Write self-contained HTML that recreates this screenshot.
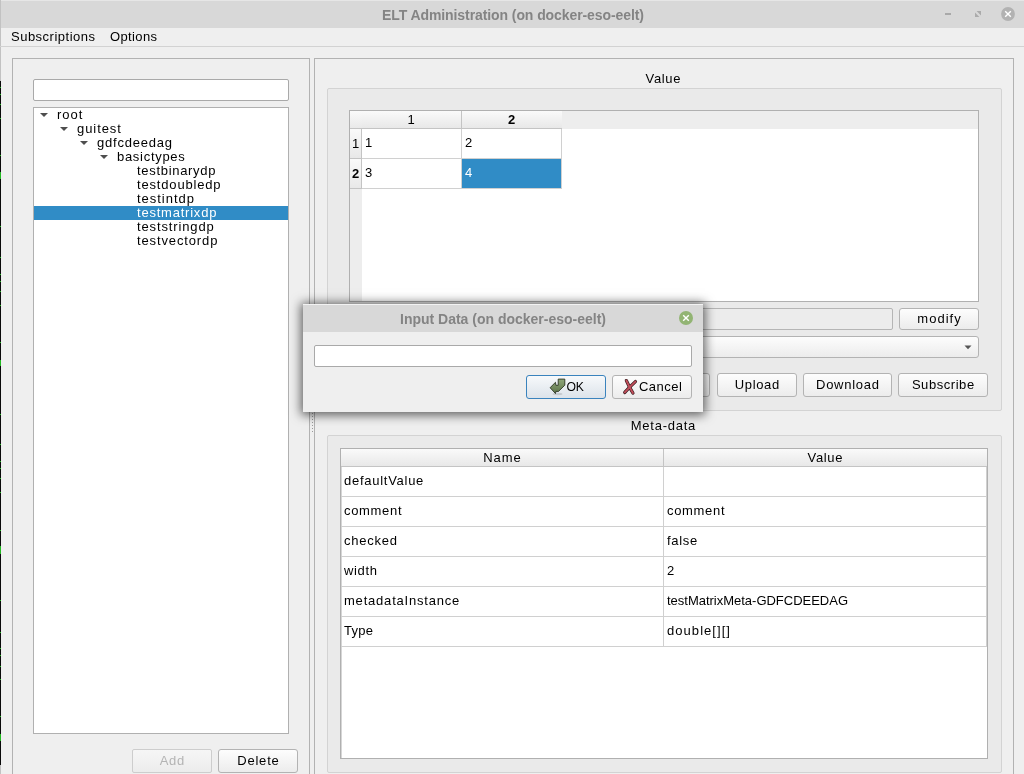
<!DOCTYPE html>
<html><head><meta charset="utf-8"><style>
html,body{margin:0;padding:0}
body{width:1024px;height:774px;overflow:hidden;background:#efefef;position:relative;font-family:"Liberation Sans",sans-serif;}
#app{position:absolute;left:0;top:0;width:1024px;height:774px;background:#efefef;will-change:transform;overflow:hidden}
#app>div,#app>span,#app>svg{position:absolute;}
span{white-space:pre;line-height:16px;-webkit-font-smoothing:antialiased}
</style></head><body><div id="app">
<div style="left:0px;top:0px;width:1024px;height:28px;background:#d8d8d8"></div>
<div style="left:0px;top:0px;width:1024px;height:1px;background:#e6e6e6"></div>
<span style="left:382.00px;top:7.15px;font-size:14px;font-weight:bold;color:#848484;letter-spacing:-0.085px">ELT Administration (on docker-eso-eelt)</span>
<div style="left:945px;top:13px;width:6px;height:2px;background:#a9a9a9"></div>
<svg style="left:974px;top:10px" width="8" height="8" viewBox="0 0 8 8"><path d="M2.6 1 H7 V5.4 Z" fill="#ababab"/><path d="M1 2.6 V7 H5.4 Z" fill="#ababab"/></svg>
<svg style="left:1000px;top:6px" width="16" height="16" viewBox="0 0 16 16"><circle cx="8" cy="8" r="6.9" fill="#b2b2b2"/><path d="M4.7 5.7 L5.7 4.7 L8 7 L10.3 4.7 L11.3 5.7 L9 8 L11.3 10.3 L10.3 11.3 L8 9 L5.7 11.3 L4.7 10.3 L7 8 Z" fill="#fff"/></svg>
<div style="left:0px;top:0px;width:1px;height:81px;background:#c2c2c2"></div>
<div style="left:0px;top:81px;width:1px;height:684px;background:#0a0a0a"></div>
<div style="left:0px;top:765px;width:1px;height:9px;background:#c2c2c2"></div>
<div style="left:0px;top:87px;width:1px;height:1px;background:#22b822"></div>
<div style="left:0px;top:94px;width:1px;height:1px;background:#22b822"></div>
<div style="left:0px;top:104px;width:1px;height:1px;background:#22b822"></div>
<div style="left:0px;top:118px;width:1px;height:1px;background:#22b822"></div>
<div style="left:0px;top:155px;width:1px;height:1px;background:#22b822"></div>
<div style="left:0px;top:172px;width:1px;height:7px;background:#22b822"></div>
<div style="left:0px;top:226px;width:1px;height:1px;background:#22b822"></div>
<div style="left:0px;top:257px;width:1px;height:1px;background:#22b822"></div>
<div style="left:0px;top:274px;width:1px;height:1px;background:#22b822"></div>
<div style="left:0px;top:281px;width:1px;height:1px;background:#22b822"></div>
<div style="left:0px;top:291px;width:1px;height:1px;background:#22b822"></div>
<div style="left:0px;top:305px;width:1px;height:1px;background:#22b822"></div>
<div style="left:0px;top:342px;width:1px;height:1px;background:#22b822"></div>
<div style="left:0px;top:360px;width:1px;height:6px;background:#22b822"></div>
<div style="left:0px;top:414px;width:1px;height:1px;background:#22b822"></div>
<div style="left:0px;top:444px;width:1px;height:1px;background:#22b822"></div>
<div style="left:0px;top:461px;width:1px;height:1px;background:#22b822"></div>
<div style="left:0px;top:468px;width:1px;height:1px;background:#22b822"></div>
<div style="left:0px;top:478px;width:1px;height:1px;background:#22b822"></div>
<div style="left:0px;top:492px;width:1px;height:1px;background:#22b822"></div>
<div style="left:0px;top:530px;width:1px;height:1px;background:#22b822"></div>
<div style="left:0px;top:546px;width:1px;height:8px;background:#22b822"></div>
<div style="left:0px;top:600px;width:1px;height:1px;background:#22b822"></div>
<div style="left:0px;top:632px;width:1px;height:1px;background:#22b822"></div>
<div style="left:0px;top:648px;width:1px;height:1px;background:#22b822"></div>
<div style="left:0px;top:655px;width:1px;height:1px;background:#22b822"></div>
<div style="left:0px;top:666px;width:1px;height:1px;background:#22b822"></div>
<div style="left:0px;top:679px;width:1px;height:1px;background:#22b822"></div>
<div style="left:0px;top:716px;width:1px;height:1px;background:#22b822"></div>
<div style="left:0px;top:734px;width:1px;height:7px;background:#22b822"></div>
<div style="left:0px;top:46px;width:1024px;height:1px;background:#d2d2d2"></div>
<span style="left:11.00px;top:28.50px;font-size:13px;font-weight:normal;color:#000;letter-spacing:0.497px">Subscriptions</span>
<span style="left:110.00px;top:28.50px;font-size:13px;font-weight:normal;color:#000;letter-spacing:0.367px">Options</span>
<div style="left:12px;top:58px;width:298px;height:730px;border:1px solid #b2b2b2;box-sizing:border-box"></div>
<div style="left:33px;top:79px;width:256px;height:22px;background:#fff;border:1px solid #a9a9a9;border-radius:2px;box-sizing:border-box"></div>
<div style="left:33px;top:107px;width:256px;height:627px;background:#fff;border:1px solid #b0b0b0;box-sizing:border-box"></div>
<div style="left:34px;top:206px;width:254px;height:14px;background:#308cc6"></div>
<span style="left:57.00px;top:106.50px;font-size:13px;font-weight:normal;color:#000;letter-spacing:0.996px">root</span>
<svg style="left:40px;top:113px" width="8" height="5" viewBox="0 0 8 5"><path d="M0 0 H8 L4 4 Z" fill="#4e4e4e"/></svg>
<span style="left:77.00px;top:120.50px;font-size:13px;font-weight:normal;color:#000;letter-spacing:0.933px">guitest</span>
<svg style="left:60px;top:127px" width="8" height="5" viewBox="0 0 8 5"><path d="M0 0 H8 L4 4 Z" fill="#4e4e4e"/></svg>
<span style="left:97.00px;top:134.50px;font-size:13px;font-weight:normal;color:#000;letter-spacing:0.782px">gdfcdeedag</span>
<svg style="left:80px;top:141px" width="8" height="5" viewBox="0 0 8 5"><path d="M0 0 H8 L4 4 Z" fill="#4e4e4e"/></svg>
<span style="left:117.00px;top:148.50px;font-size:13px;font-weight:normal;color:#000;letter-spacing:0.706px">basictypes</span>
<svg style="left:100px;top:155px" width="8" height="5" viewBox="0 0 8 5"><path d="M0 0 H8 L4 4 Z" fill="#4e4e4e"/></svg>
<span style="left:137.00px;top:162.50px;font-size:13px;font-weight:normal;color:#000;letter-spacing:0.695px">testbinarydp</span>
<span style="left:137.00px;top:176.50px;font-size:13px;font-weight:normal;color:#000;letter-spacing:0.830px">testdoubledp</span>
<span style="left:137.00px;top:190.50px;font-size:13px;font-weight:normal;color:#000;letter-spacing:0.971px">testintdp</span>
<span style="left:137.00px;top:204.50px;font-size:13px;font-weight:normal;color:#fff;letter-spacing:0.780px">testmatrixdp</span>
<span style="left:137.00px;top:218.50px;font-size:13px;font-weight:normal;color:#000;letter-spacing:0.868px">teststringdp</span>
<span style="left:137.00px;top:232.50px;font-size:13px;font-weight:normal;color:#000;letter-spacing:0.868px">testvectordp</span>
<div style="left:132px;top:749px;width:80px;height:24px;background:linear-gradient(#f6f6f6,#ececec);border:1px solid #cdcdcd;border-radius:2px;box-sizing:border-box"></div>
<span style="left:159.74px;top:752.50px;font-size:13px;font-weight:normal;color:#b4b4b4;letter-spacing:0.699px">Add</span>
<div style="left:218px;top:749px;width:80px;height:24px;background:linear-gradient(#fdfdfd,#ececec);border:1px solid #b3b3b3;border-radius:3px;box-sizing:border-box"></div>
<span style="left:237.20px;top:752.50px;font-size:13px;font-weight:normal;color:#000;letter-spacing:0.806px">Delete</span>
<div style="left:314px;top:58px;width:700px;height:730px;border:1px solid #b2b2b2;box-sizing:border-box"></div>
<span style="left:645.62px;top:70.50px;font-size:13px;font-weight:normal;color:#000;letter-spacing:0.621px">Value</span>
<div style="left:327px;top:88px;width:675px;height:323px;background:#eaeaea;border:1px solid #d3d3d3;border-radius:2px;box-sizing:border-box"></div>
<div style="left:349px;top:110px;width:630px;height:192px;background:#fff;border:1px solid #b0b0b0;box-sizing:border-box"></div>
<div style="left:350px;top:111px;width:628px;height:18px;background:#ededed"></div>
<div style="left:350px;top:129px;width:12px;height:172px;background:#ededed"></div>
<div style="left:350px;top:111px;width:12px;height:18px;background:linear-gradient(#fafafa,#e8e8e8)"></div>
<div style="left:362px;top:111px;width:100px;height:18px;background:linear-gradient(#fafafa,#e8e8e8);border-right:1px solid #c4c4c4;border-bottom:1px solid #c4c4c4;box-sizing:border-box"></div>
<div style="left:462px;top:111px;width:100px;height:18px;background:linear-gradient(#fafafa,#e8e8e8);border-bottom:1px solid #c4c4c4;box-sizing:border-box"></div>
<div style="left:350px;top:128px;width:12px;height:1px;background:#c4c4c4"></div>
<div style="left:350px;top:129px;width:12px;height:30px;background:linear-gradient(#fafafa,#e8e8e8);border-right:1px solid #c4c4c4;border-bottom:1px solid #c4c4c4;box-sizing:border-box"></div>
<div style="left:350px;top:159px;width:12px;height:30px;background:linear-gradient(#fafafa,#e8e8e8);border-right:1px solid #c4c4c4;border-bottom:1px solid #c4c4c4;box-sizing:border-box"></div>
<div style="left:362px;top:129px;width:100px;height:30px;background:#fff;border-right:1px solid #d0d0d0;border-bottom:1px solid #d0d0d0;box-sizing:border-box"></div>
<div style="left:462px;top:129px;width:100px;height:30px;background:#fff;border-right:1px solid #d0d0d0;border-bottom:1px solid #d0d0d0;box-sizing:border-box"></div>
<div style="left:362px;top:159px;width:100px;height:30px;background:#fff;border-right:1px solid #d0d0d0;border-bottom:1px solid #d0d0d0;box-sizing:border-box"></div>
<div style="left:462px;top:159px;width:100px;height:30px;background:#308cc6;border-right:1px solid #d0d0d0;border-bottom:1px solid #d0d0d0;box-sizing:border-box"></div>
<span style="left:407.47px;top:111.50px;font-size:13px;font-weight:normal;color:#000;letter-spacing:0.000px">1</span>
<span style="left:508.10px;top:111.50px;font-size:13px;font-weight:bold;color:#000;letter-spacing:0.000px">2</span>
<span style="left:351.97px;top:135.50px;font-size:13px;font-weight:normal;color:#000;letter-spacing:0.000px">1</span>
<span style="left:352.10px;top:165.50px;font-size:13px;font-weight:bold;color:#000;letter-spacing:0.000px">2</span>
<span style="left:365.00px;top:134.90px;font-size:13px;font-weight:normal;color:#000;letter-spacing:0.000px">1</span>
<span style="left:465.00px;top:134.90px;font-size:13px;font-weight:normal;color:#000;letter-spacing:0.000px">2</span>
<span style="left:365.00px;top:164.90px;font-size:13px;font-weight:normal;color:#000;letter-spacing:0.000px">3</span>
<span style="left:465.00px;top:164.90px;font-size:13px;font-weight:normal;color:#fff;letter-spacing:0.000px">4</span>
<div style="left:349px;top:308px;width:544px;height:22px;background:#ececec;border:1px solid #b5b5b5;border-radius:2px;box-sizing:border-box"></div>
<div style="left:899px;top:308px;width:80px;height:22px;background:linear-gradient(#fdfdfd,#ececec);border:1px solid #b3b3b3;border-radius:3px;box-sizing:border-box"></div>
<span style="left:917.31px;top:310.50px;font-size:13px;font-weight:normal;color:#000;letter-spacing:1.017px">modify</span>
<div style="left:349px;top:336px;width:630px;height:22px;background:linear-gradient(#fdfdfd,#ececec);border:1px solid #b3b3b3;border-radius:3px;box-sizing:border-box"></div>
<svg style="left:964px;top:345px" width="8" height="5" viewBox="0 0 8 5"><path d="M0.5 0.5 H7.5 L4 4.2 Z" fill="#555"/></svg>
<div style="left:622px;top:373px;width:88px;height:24px;background:linear-gradient(#fdfdfd,#ececec);border:1px solid #b3b3b3;border-radius:3px;box-sizing:border-box"></div>
<span style="left:650.08px;top:376.50px;font-size:13px;font-weight:normal;color:#000;letter-spacing:0.257px">Read</span>
<div style="left:717px;top:373px;width:80px;height:24px;background:linear-gradient(#fdfdfd,#ececec);border:1px solid #b3b3b3;border-radius:3px;box-sizing:border-box"></div>
<span style="left:734.81px;top:376.50px;font-size:13px;font-weight:normal;color:#000;letter-spacing:0.636px">Upload</span>
<div style="left:803px;top:373px;width:89px;height:24px;background:linear-gradient(#fdfdfd,#ececec);border:1px solid #b3b3b3;border-radius:3px;box-sizing:border-box"></div>
<span style="left:816.03px;top:376.50px;font-size:13px;font-weight:normal;color:#000;letter-spacing:0.732px">Download</span>
<div style="left:898px;top:373px;width:90px;height:24px;background:linear-gradient(#fdfdfd,#ececec);border:1px solid #b3b3b3;border-radius:3px;box-sizing:border-box"></div>
<span style="left:911.89px;top:376.50px;font-size:13px;font-weight:normal;color:#000;letter-spacing:0.553px">Subscribe</span>
<span style="left:630.72px;top:417.50px;font-size:13px;font-weight:normal;color:#000;letter-spacing:0.753px">Meta-data</span>
<div style="left:327px;top:435px;width:675px;height:338px;background:#eaeaea;border:1px solid #d3d3d3;border-radius:2px;box-sizing:border-box"></div>
<div style="left:340px;top:448px;width:648px;height:311px;background:#fff;border:1px solid #b0b0b0;box-sizing:border-box"></div>
<div style="left:341px;top:449px;width:323px;height:18px;background:linear-gradient(#fafafa,#e8e8e8);border-right:1px solid #c4c4c4;border-bottom:1px solid #c4c4c4;box-sizing:border-box"></div>
<div style="left:664px;top:449px;width:323px;height:18px;background:linear-gradient(#fafafa,#e8e8e8);border-bottom:1px solid #c4c4c4;box-sizing:border-box"></div>
<div style="left:341px;top:467px;width:1px;height:291px;background:#d6d6d6"></div>
<span style="left:483.31px;top:449.50px;font-size:13px;font-weight:normal;color:#000;letter-spacing:0.898px">Name</span>
<span style="left:807.62px;top:449.50px;font-size:13px;font-weight:normal;color:#000;letter-spacing:0.621px">Value</span>
<div style="left:341px;top:467px;width:323px;height:30px;border-right:1px solid #d0d0d0;border-bottom:1px solid #d0d0d0;box-sizing:border-box"></div>
<div style="left:664px;top:467px;width:323px;height:30px;border-right:1px solid #d0d0d0;border-bottom:1px solid #d0d0d0;box-sizing:border-box"></div>
<span style="left:344.00px;top:472.50px;font-size:13px;font-weight:normal;color:#000;letter-spacing:0.728px">defaultValue</span>
<div style="left:341px;top:497px;width:323px;height:30px;border-right:1px solid #d0d0d0;border-bottom:1px solid #d0d0d0;box-sizing:border-box"></div>
<div style="left:664px;top:497px;width:323px;height:30px;border-right:1px solid #d0d0d0;border-bottom:1px solid #d0d0d0;box-sizing:border-box"></div>
<span style="left:344.00px;top:502.50px;font-size:13px;font-weight:normal;color:#000;letter-spacing:0.674px">comment</span>
<span style="left:667.00px;top:502.50px;font-size:13px;font-weight:normal;color:#000;letter-spacing:0.674px">comment</span>
<div style="left:341px;top:527px;width:323px;height:30px;border-right:1px solid #d0d0d0;border-bottom:1px solid #d0d0d0;box-sizing:border-box"></div>
<div style="left:664px;top:527px;width:323px;height:30px;border-right:1px solid #d0d0d0;border-bottom:1px solid #d0d0d0;box-sizing:border-box"></div>
<span style="left:344.00px;top:532.50px;font-size:13px;font-weight:normal;color:#000;letter-spacing:0.764px">checked</span>
<span style="left:667.00px;top:532.50px;font-size:13px;font-weight:normal;color:#000;letter-spacing:0.665px">false</span>
<div style="left:341px;top:557px;width:323px;height:30px;border-right:1px solid #d0d0d0;border-bottom:1px solid #d0d0d0;box-sizing:border-box"></div>
<div style="left:664px;top:557px;width:323px;height:30px;border-right:1px solid #d0d0d0;border-bottom:1px solid #d0d0d0;box-sizing:border-box"></div>
<span style="left:344.00px;top:562.50px;font-size:13px;font-weight:normal;color:#000;letter-spacing:0.663px">width</span>
<span style="left:667.00px;top:562.50px;font-size:13px;font-weight:normal;color:#000;letter-spacing:0.000px">2</span>
<div style="left:341px;top:587px;width:323px;height:30px;border-right:1px solid #d0d0d0;border-bottom:1px solid #d0d0d0;box-sizing:border-box"></div>
<div style="left:664px;top:587px;width:323px;height:30px;border-right:1px solid #d0d0d0;border-bottom:1px solid #d0d0d0;box-sizing:border-box"></div>
<span style="left:344.00px;top:592.50px;font-size:13px;font-weight:normal;color:#000;letter-spacing:0.795px">metadataInstance</span>
<span style="left:667.00px;top:592.50px;font-size:13px;font-weight:normal;color:#000;letter-spacing:-0.012px">testMatrixMeta-GDFCDEEDAG</span>
<div style="left:341px;top:617px;width:323px;height:30px;border-right:1px solid #d0d0d0;border-bottom:1px solid #d0d0d0;box-sizing:border-box"></div>
<div style="left:664px;top:617px;width:323px;height:30px;border-right:1px solid #d0d0d0;border-bottom:1px solid #d0d0d0;box-sizing:border-box"></div>
<span style="left:344.00px;top:622.50px;font-size:13px;font-weight:normal;color:#000;letter-spacing:0.304px">Type</span>
<span style="left:667.00px;top:622.50px;font-size:13px;font-weight:normal;color:#000;letter-spacing:1.053px">double[][]</span>
<div style="left:312px;top:413px;width:1px;height:1px;background:#9a9a9a"></div>
<div style="left:312px;top:416px;width:1px;height:1px;background:#9a9a9a"></div>
<div style="left:312px;top:419px;width:1px;height:1px;background:#9a9a9a"></div>
<div style="left:312px;top:422px;width:1px;height:1px;background:#9a9a9a"></div>
<div style="left:312px;top:425px;width:1px;height:1px;background:#9a9a9a"></div>
<div style="left:312px;top:428px;width:1px;height:1px;background:#9a9a9a"></div>
<div style="left:312px;top:431px;width:1px;height:1px;background:#9a9a9a"></div>
<div style="left:303px;top:304px;width:400px;height:108px;background:#efefef;box-shadow:0 1px 10px 2px rgba(0,0,0,0.62)"></div>
<div style="left:303px;top:304px;width:400px;height:28px;background:#d8d8d8"></div>
<div style="left:303px;top:304px;width:400px;height:1px;background:#f2f2f2"></div>
<span style="left:400.00px;top:311.15px;font-size:14px;font-weight:bold;color:#848484;letter-spacing:-0.004px">Input Data (on docker-eso-eelt)</span>
<svg style="left:678px;top:310px" width="16" height="16" viewBox="0 0 16 16"><circle cx="8" cy="8" r="7" fill="#92b473"/><path d="M4.7 5.7 L5.7 4.7 L8 7 L10.3 4.7 L11.3 5.7 L9 8 L11.3 10.3 L10.3 11.3 L8 9 L5.7 11.3 L4.7 10.3 L7 8 Z" fill="#fff"/></svg>
<div style="left:314px;top:345px;width:378px;height:22px;background:#fff;border:1px solid #a9a9a9;border-radius:2px;box-sizing:border-box"></div>
<div style="left:526px;top:375px;width:80px;height:24px;background:linear-gradient(#f7f9fb,#dce3ea);border:1px solid #3a83bd;border-radius:3px;box-sizing:border-box"></div>
<svg style="left:546px;top:376px" width="22" height="22" viewBox="0 0 22 22"><defs><linearGradient id="gok" x1="0" y1="0" x2="0" y2="1"><stop offset="0" stop-color="#8fa77a"/><stop offset="1" stop-color="#5d7449"/></linearGradient></defs><ellipse cx="11.5" cy="18" rx="5" ry="1.2" fill="rgba(0,0,0,0.12)"/><path d="M12.2 3.1 H18.8 V9.2 L12.5 15.4 H9.8 L9.5 17.6 L4.1 11.7 L9.5 6.3 L9.9 9.3 H12.2 Z" fill="url(#gok)" stroke="#2c3522" stroke-width="0.9" stroke-linejoin="miter"/></svg>
<span style="left:566.50px;top:378.77px;font-size:12.2px;font-weight:normal;color:#000;letter-spacing:-0.327px">OK</span>
<div style="left:612px;top:375px;width:80px;height:24px;background:linear-gradient(#fdfdfd,#ececec);border:1px solid #b3b3b3;border-radius:3px;box-sizing:border-box"></div>
<svg style="left:618px;top:376px" width="24" height="22" viewBox="0 0 24 22"><path d="M8.4 4.6 Q11.2 11 14.9 17" stroke="#3a1a1c" stroke-width="3.3" stroke-linecap="round" fill="none"/><path d="M17.4 5.6 Q12 10.5 6.8 16.4" stroke="#3a1a1c" stroke-width="3.3" stroke-linecap="round" fill="none"/><path d="M8.4 4.6 Q11.2 11 14.9 17" stroke="#c24f5c" stroke-width="1.9" stroke-linecap="round" fill="none"/><path d="M17.4 5.6 Q12 10.5 6.8 16.4" stroke="#c24f5c" stroke-width="1.9" stroke-linecap="round" fill="none"/></svg>
<span style="left:639.00px;top:378.50px;font-size:13px;font-weight:normal;color:#000;letter-spacing:0.486px">Cancel</span>
</div></body></html>
